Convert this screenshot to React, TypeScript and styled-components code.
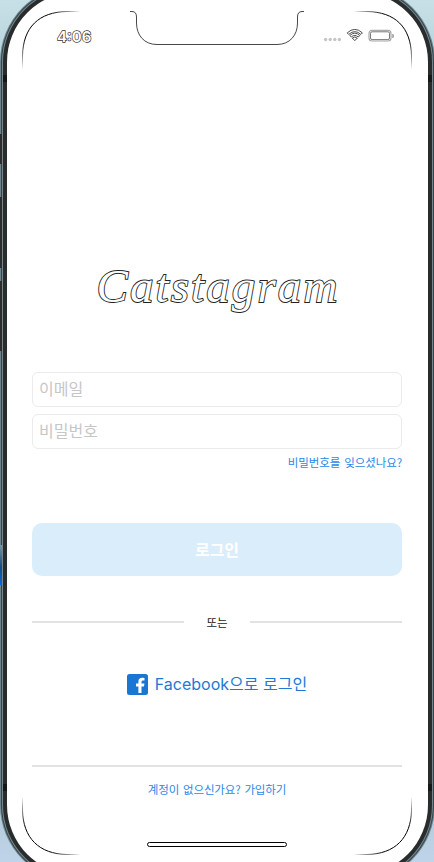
import React from 'react';
import styled, { createGlobalStyle } from 'styled-components';

const GlobalStyle = createGlobalStyle`
  * { box-sizing: border-box; }
  html, body { margin: 0; overflow: hidden; }
  body { font-family: Inter, 'Noto Sans CJK KR', sans-serif; }
`;

const Desktop = styled.div`
  position: relative;
  width: 434px;
  height: 862px;
  overflow: hidden;
  background: linear-gradient(180deg, #c7e0e8 0%, #9dbbc5 20%, #8ba8b1 60%, #a5bdcb 86%, #bfd4e8 100%);
`;

const SideKey = styled.i<{ $top: number; $height: number; $blue?: boolean }>`
  position: absolute;
  left: 0;
  top: ${p => p.$top}px;
  width: 2px;
  height: ${p => p.$height}px;
  background: ${p => (p.$blue ? 'linear-gradient(#7795a0, #164c85 55%, #0866d5)' : '#2c2c2d')};
`;

const Device = styled.main`
  position: relative;
  display: flex;
  flex-direction: column;
  width: 421px;
  height: 883px;
  margin: -8px 0 0 7px;
  padding: 8px 26px 0 25px;
  border-radius: 70px;
  background: #fff;
  box-shadow: 0 0 0 4px #292c2d, 0 0 0 5px #77868a, 0 0 0 6px #35444b, 0 0 0 7px #6c858d;
`;

const Antenna = styled.i<{ $top: number; $side: 'left' | 'right' }>`
  position: absolute;
  top: ${p => p.$top}px;
  ${p => p.$side}: ${p => (p.$side === 'left' ? 3 : 2)}px;
  width: 4px;
  height: 7px;
  background: #151819;
`;

const Outline = styled.svg`
  position: absolute;
  inset: 0;
  pointer-events: none;
`;

const StatusBar = styled.header`
  display: flex;
  align-items: center;
  justify-content: space-between;
  height: 20px;
  margin-top: 26px;
  padding: 0 7px 0 25px;
`;

const Clock = styled.time`
  font: 600 15px/20px Inter, sans-serif;
  padding-top: 1px;
  color: #fff;
  -webkit-text-stroke: 1.3px #333;
  paint-order: stroke fill;
`;

const Logo = styled.h1`
  height: 60px;
  margin: 211px 0 0;
  padding-left: 2px;
  font: italic 400 47px/58px 'Liberation Serif', serif;
  letter-spacing: 2.1px;
  text-align: center;
  color: #fff;
  -webkit-text-stroke: 1.8px #222;
  paint-order: stroke fill;
`;

const Form = styled.form`
  display: flex;
  flex-direction: column;
  gap: 7px;
  margin-top: 55px;
`;

const Field = styled.input`
  width: 100%;
  height: 35px;
  padding: 0 6px 3px;
  border: 1px solid #ebebeb;
  border-radius: 6px;
  outline: 0;
  background: #fff;
  font: 400 16px/22px 'Noto Sans CJK KR', sans-serif;
  &::placeholder { color: #c6c6c8; opacity: 1; }
`;

const TextLink = styled.a<{ $spacing: number }>`
  height: 18px;
  font: 400 11.5px/18px 'Noto Sans CJK KR', sans-serif;
  letter-spacing: ${p => p.$spacing}px;
  word-spacing: 1.5px;
  white-space: nowrap;
  color: #2b88e8;
`;

const Forgot = styled(TextLink)`
  align-self: flex-end;
  margin-top: -3px;
`;

const LoginButton = styled.button`
  height: 53px;
  margin-top: 45px;
  padding: 0 0 2px;
  border: 0;
  border-radius: 10px;
  background: #daedfb;
  color: #fff;
  font: 700 16px/24px 'Noto Sans CJK KR', sans-serif;
`;

const Divider = styled.div`
  display: grid;
  grid-template-columns: 152px 1fr 152px;
  align-items: center;
  height: 20px;
  margin-top: 36px;
  font: 400 11.5px/20px 'Noto Sans CJK KR', sans-serif;
  letter-spacing: -0.2px;
  color: #222;
  text-align: center;
`;

const Rule = styled.hr`
  width: 100%;
  height: 2px;
  margin: 0;
  border: 0;
  background: #e3e3e3;
`;

const FacebookLink = styled.a`
  display: flex;
  align-items: center;
  justify-content: center;
  gap: 7px;
  height: 26px;
  margin-top: 39px;
  color: #2178d6;
  font: 400 16px/26px Inter, 'Noto Sans CJK KR', sans-serif;
`;

const Footer = styled.footer`
  display: flex;
  flex-direction: column;
  align-items: center;
  gap: 13px;
  margin-top: 68px;
`;

const HomeBar = styled.div`
  align-self: center;
  width: 140px;
  height: 5px;
  margin-top: 44px;
  border: 1px solid #000;
  border-radius: 3px;
`;

function StatusIcons() {
  return (
    <svg width="72" height="14" viewBox="0 0 72 14" fill="none">
      <g fill="#c6c6c6">
        <circle cx="2.6" cy="10.5" r="1.7" />
        <circle cx="7.2" cy="10.5" r="1.7" />
        <circle cx="11.8" cy="10.5" r="1.7" />
        <circle cx="16.4" cy="10.5" r="1.7" />
      </g>
      <g stroke="#222" strokeWidth=".8">
        <path d="M24.2 3.9Q31.8-3.2 39.4 3.9L37.9 5.4Q31.8-.1 25.7 5.4Z" />
        <path d="M26.8 6.5Q31.8 1.8 36.8 6.5L35.3 8Q31.8 4.8 28.3 8Z" />
        <path d="M29.3 9.1Q31.8 6.9 34.3 9.1L31.8 11.6Z" />
      </g>
      <rect x="46" y="1.4" width="22" height="10.6" rx="3" stroke="#aaa" strokeWidth="1.2" />
      <rect x="47.5" y="2.8" width="19" height="7.8" rx="1.6" stroke="#555" strokeWidth=".8" />
      <path d="M69.7 5v4q2-2 0-4Z" fill="#aaa" stroke="#aaa" />
    </svg>
  );
}

const CORNERS = [
  { id: 'tl', cx: 37, cy: 26, d: 'M22.5 70V56C23 27 39 12 67 11.5H83' },
  { id: 'tr', cx: 397, cy: 26, d: 'M411.5 70V56C411 27 395 12 367 11.5H351' },
  { id: 'bl', cx: 37, cy: 840, d: 'M22.5 796V810C23 838 39 854 67 854.5H83' },
  { id: 'br', cx: 397, cy: 840, d: 'M411.5 796V810C411 838 395 854 367 854.5H351' },
];

function ScreenOutline() {
  return (
    <Outline width="434" height="862" viewBox="0 0 434 862" fill="none">
      <defs>
        {CORNERS.map(c => (
          <radialGradient key={c.id} id={c.id} gradientUnits="userSpaceOnUse" cx={c.cx} cy={c.cy} r="46">
            <stop offset=".4" stopColor="#000" />
            <stop offset="1" stopColor="#000" stopOpacity="0" />
          </radialGradient>
        ))}
      </defs>
      {CORNERS.map(c => (
        <path key={c.id} d={c.d} stroke={`url(#${c.id})`} />
      ))}
      <path d="M130 11.5H132Q136.5 11.5 136.5 17V23C136.5 35 144 44.5 157 44.5H277C290 44.5 297.5 35 297.5 23V17Q297.5 11.5 302 11.5H304" stroke="#333" strokeWidth=".9" />
    </Outline>
  );
}

export default function App() {
  return (
    <>
      <GlobalStyle />
      <Desktop>
        <Device>
          <StatusBar>
            <Clock>4:06</Clock>
            <StatusIcons />
          </StatusBar>
          <Logo>Catstagram</Logo>
          <Form>
            <Field type="text" placeholder="이메일" />
            <Field type="password" placeholder="비밀번호" />
            <Forgot $spacing={-0.1}>비밀번호를 잊으셨나요?</Forgot>
            <LoginButton type="button">로그인</LoginButton>
          </Form>
          <Divider>
            <Rule />
            <span>또는</span>
            <Rule />
          </Divider>
          <FacebookLink>
            <svg width="21" height="21" viewBox="0 0 21 21">
              <rect width="21" height="21" rx="2.5" fill="#1976d2" />
              <path d="M14.5 19V12.5H17L17.4 9.6H14.5V7.9Q14.5 6.5 16 6.5H17.5V4Q16.5 3.8 15.4 3.8Q11.4 3.8 11.4 7.5V9.6H9V12.5H11.4V19Z" fill="#fff" />
            </svg>
            <span>Facebook으로 로그인</span>
          </FacebookLink>
          <Footer>
            <Rule />
            <TextLink $spacing={-0.15}>계정이 없으신가요? 가입하기</TextLink>
          </Footer>
          <HomeBar />
        </Device>
        <ScreenOutline />
        <SideKey $top={134} $height={30} />
        <SideKey $top={197} $height={71} />
        <SideKey $top={281} $height={70} />
        <SideKey $top={545} $height={40} $blue />
        <Antenna $top={75} $side="left" />
        <Antenna $top={75} $side="right" />
        <Antenna $top={784} $side="left" />
        <Antenna $top={784} $side="right" />
      </Desktop>
    </>
  );
}
